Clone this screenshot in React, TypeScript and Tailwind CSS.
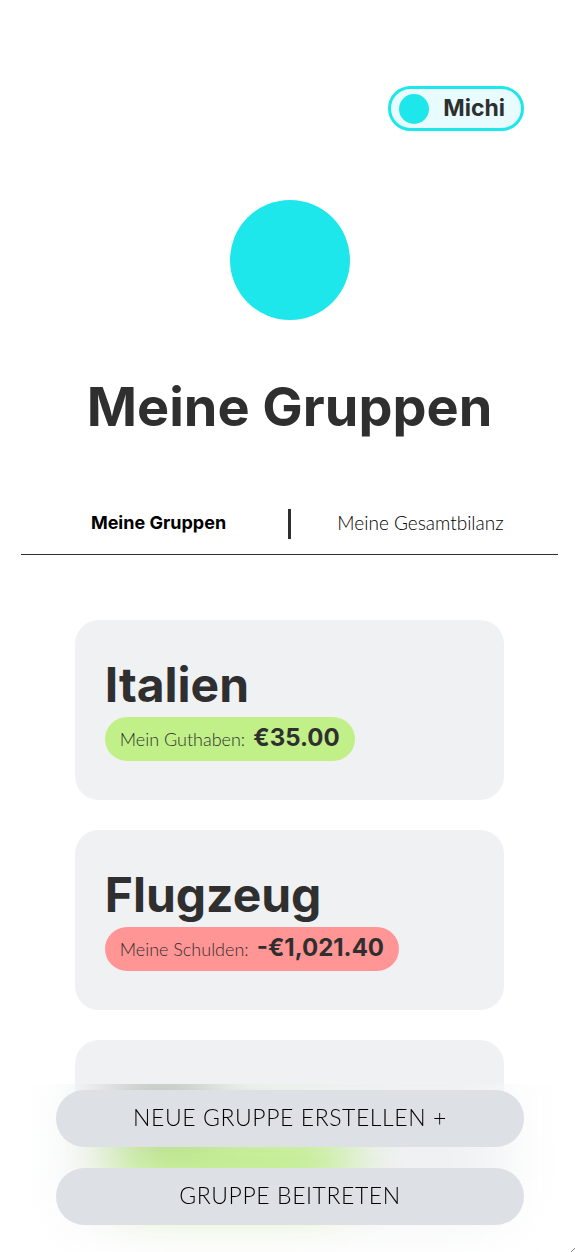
import React from "react";

type Group = { name: string; label: string; amount: string; credit: boolean };

const groups: Group[] = [
  { name: "Italien", label: "Mein Guthaben:", amount: "€35.00", credit: true },
  { name: "Flugzeug", label: "Meine Schulden:", amount: "-€1,021.40", credit: false },
];

function GroupCard({ name, label, amount, credit }: Group) {
  return (
    <li className="h-[180px] rounded-3xl bg-[#eff1f3] px-[30px] pt-[35px]">
      <h2 className="h-[62px] text-[48px] leading-[60px] font-bold">{name}</h2>
      <p
        className={
          credit
            ? "flex h-11 w-fit items-baseline gap-2 rounded-full bg-[#c1f088] px-[15px] leading-[42px]"
            : "flex h-11 w-fit items-baseline gap-2 rounded-full bg-[#ff9595] px-[15px] leading-[42px]"
        }
      >
        <span className="font-['Lato'] text-[18px] font-light">{label}</span>
        <strong className="text-[24px] font-bold">{amount}</strong>
      </p>
    </li>
  );
}

export default function App() {
  return (
    <div className="relative h-screen overflow-hidden bg-white pr-[17px] pl-[21px] font-['Inter',sans-serif] text-[#2f2f2f]">
      <header className="flex justify-end pt-[86px] pr-[34px]">
        <button className="flex h-[45px] items-center gap-3.5 rounded-full border-3 border-[#1de7eb] bg-[#e8fbff] pr-4 pl-2">
          <span className="size-[30px] rounded-full bg-[#1de7eb]" />
          <span className="pb-0.5 text-[23px] leading-8 font-bold">Michi</span>
        </button>
      </header>

      <main>
        <div className="mx-auto mt-[69px] size-[120px] rounded-full bg-[#1de7eb]" />
        <h1 className="mt-[53px] text-center text-[54px] leading-[68px] font-bold whitespace-nowrap">
          Meine Gruppen
        </h1>

        <nav className="mt-[68px] flex h-[46px] border-b border-[#2f2f2f] px-2 leading-7 text-black">
          <a href="#gruppen" className="flex-1 text-center text-[18px] font-bold">
            Meine Gruppen
          </a>
          <span className="h-[30px] w-[3px] bg-[#2f2f2f]" />
          <a href="#bilanz" className="flex-1 text-center font-['Lato'] text-[19px] font-light">
            Meine Gesamtbilanz
          </a>
        </nav>

        <ul className="mx-auto mt-[65px] flex w-4/5 flex-col gap-[30px]">
          {groups.map((group) => (
            <GroupCard key={group.name} {...group} />
          ))}
          <li aria-hidden="true" className="h-[180px] rounded-3xl bg-[#eff1f3] px-[30px] pt-[50px]">
            <div className="ml-2 h-5 w-24 rounded-lg bg-[#2f2f2f]/80" />
            <div className="mt-5 ml-2 h-16 w-[240px] rounded-full bg-[#b6ec76]" />
          </li>
        </ul>
      </main>

      <footer className="fixed inset-x-0 bottom-0 flex flex-col gap-[21px] pt-1.5 pr-[51px] pb-[27px] pl-14 text-black backdrop-blur-[30px]">
        <button className="h-[57px] rounded-full bg-[#dde0e5] pb-0.5 font-['Lato'] text-[23px] font-light tracking-wide">
          NEUE GRUPPE ERSTELLEN +
        </button>
        <button className="h-[57px] rounded-full bg-[#dde0e5] pb-0.5 font-['Lato'] text-[23px] font-light tracking-wide">
          GRUPPE BEITRETEN
        </button>
        <svg className="absolute right-0 bottom-0 size-1" viewBox="0 0 4 4" aria-hidden="true">
          <path d="M0 4L4 0" stroke="#8a8a8a" strokeWidth="1" />
        </svg>
      </footer>
    </div>
  );
}
